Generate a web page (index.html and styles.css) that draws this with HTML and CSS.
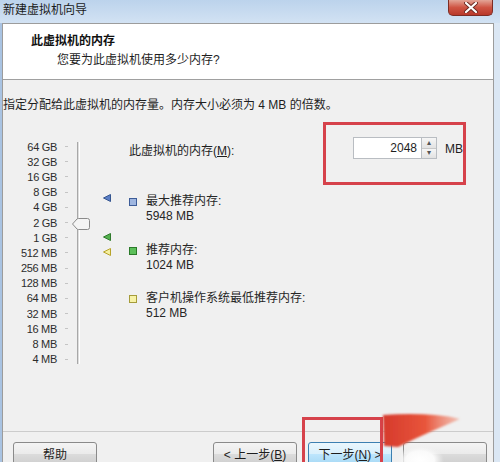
FILE: index.html
```html
<!DOCTYPE html>
<html lang="zh-CN">
<head>
  <meta charset="UTF-8">
  <title>新建虚拟机向导</title>
  <link rel="stylesheet" href="styles.css">
</head>
<body>
  <div class="window">
    <div class="titlebar">
      <span class="title">新建虚拟机向导</span>
      <div class="close">
        <svg width="14" height="11" viewBox="0 0 14 11">
          <path d="M2 1 L12 10 M12 1 L2 10" stroke="#6b2a22" stroke-width="4" stroke-linecap="round"/>
          <path d="M2 1 L12 10 M12 1 L2 10" stroke="#fff" stroke-width="2.2" stroke-linecap="round"/>
        </svg>
      </div>
    </div>

    <div class="client">
      <div class="header">
        <h2>此虚拟机的内存</h2>
        <p>您要为此虚拟机使用多少内存?</p>
      </div>

      <div class="body">
        <p class="intro">指定分配给此虚拟机的内存量。内存大小必须为 4 MB 的倍数。</p>

        <div class="memory">
          <ul class="scale">
            <li><span>64 GB</span><i></i></li>
            <li><span>32 GB</span><i></i></li>
            <li><span>16 GB</span><i></i></li>
            <li><span>8 GB</span><i></i></li>
            <li><span>4 GB</span><i></i></li>
            <li><span>2 GB</span><i></i></li>
            <li><span>1 GB</span><i></i></li>
            <li><span>512 MB</span><i></i></li>
            <li><span>256 MB</span><i></i></li>
            <li><span>128 MB</span><i></i></li>
            <li><span>64 MB</span><i></i></li>
            <li><span>32 MB</span><i></i></li>
            <li><span>16 MB</span><i></i></li>
            <li><span>8 MB</span><i></i></li>
            <li><span>4 MB</span><i></i></li>
          </ul>

          <div class="track">
            <svg class="thumb" width="18" height="12" viewBox="0 0 18 12">
              <path d="M0.5 6 L5 1 Q5.5 0.5 6.5 0.5 L15.5 0.5 Q17.5 0.5 17.5 2.5 L17.5 9.5 Q17.5 11.5 15.5 11.5 L6.5 11.5 Q5.5 11.5 5 11 Z" fill="#f4f4f4" stroke="#8a8a8a"/>
            </svg>
          </div>

          <div class="markers">
            <svg class="tri tri-max" width="8" height="8" viewBox="0 0 8 8">
              <path d="M0.5 4 L7.5 0.5 L7.5 7.5 Z" fill="#5b7fc6" stroke="#35558f"/>
            </svg>
            <svg class="tri tri-rec" width="8" height="8" viewBox="0 0 8 8">
              <path d="M0.5 4 L7.5 0.5 L7.5 7.5 Z" fill="#54b14f" stroke="#2f7a2c"/>
            </svg>
            <svg class="tri tri-min" width="8" height="8" viewBox="0 0 8 8">
              <path d="M0.5 4 L7.5 0.5 L7.5 7.5 Z" fill="#f6f0a0" stroke="#b7a32a"/>
            </svg>
          </div>

          <div class="details">
            <div class="field">
              <label for="memSize">此虚拟机的内存(<u>M</u>):</label>
              <div class="spin">
                <input id="memSize" type="text" value="2048">
                <div class="arrows">
                  <span>&#9652;</span>
                  <span>&#9662;</span>
                </div>
              </div>
              <span class="unit">MB</span>
              <div class="mark mark-field"></div>
            </div>

            <div class="entry">
              <i class="sq sq-max"></i>
              <div>最大推荐内存:<br>5948 MB</div>
            </div>
            <div class="entry entry-rec">
              <i class="sq sq-rec"></i>
              <div>推荐内存:<br>1024 MB</div>
            </div>
            <div class="entry entry-min">
              <i class="sq sq-min"></i>
              <div>客户机操作系统最低推荐内存:<br>512 MB</div>
            </div>
          </div>
        </div>
      </div>

      <div class="footer">
        <button class="btn">帮助</button>
        <div class="nav">
          <button class="btn">&lt; 上一步(<u>B</u>)</button>
          <button class="btn btn-default">下一步(<u>N</u>) &gt;</button>
          <button class="btn"></button>
        </div>
        <div class="mark mark-next"></div>
      </div>
    </div>

    <svg class="smudge" width="100" height="60" viewBox="0 0 100 60">
      <defs>
        <linearGradient id="stroke" x1="0" y1="0" x2="1" y2="0">
          <stop offset="0" stop-color="#d63a2c"/>
          <stop offset="0.55" stop-color="#e8553b"/>
          <stop offset="1" stop-color="#f29078" stop-opacity="0.5"/>
        </linearGradient>
        <radialGradient id="glow">
          <stop offset="0" stop-color="#ffffff"/>
          <stop offset="0.6" stop-color="#fafafa"/>
          <stop offset="1" stop-color="#f0f0f0" stop-opacity="0"/>
        </radialGradient>
        <filter id="soft" x="-10%" y="-10%" width="120%" height="120%">
          <feGaussianBlur stdDeviation="1.2"/>
        </filter>
      </defs>
      <path d="M3 5 Q30 3 55 5 Q70 6 80 9 Q66 15 50 22 Q32 30 18 37 L4 36 Z" fill="url(#stroke)" filter="url(#soft)"/>
      <ellipse cx="40" cy="50" rx="24" ry="15" fill="url(#glow)"/>
    </svg>
  </div>
</body>
</html>
```

FILE: styles.css
```css
body {
  margin: 0;
  padding: 0;
  background: #ffffff;
  font-family: "Liberation Sans", "Noto Sans CJK SC", sans-serif;
  font-size: 12px;
  color: #1e1e1e;
}

.window {
  position: relative;
  width: 500px;
  height: 462px;
  overflow: hidden;
  background: linear-gradient(to right, #a9c3e2 0, #a9c3e2 2px, #dbe7f4 2px);
}

.titlebar {
  display: flex;
  justify-content: space-between;
  align-items: flex-start;
  height: 23px;
  background: linear-gradient(to bottom, #bcd3ec, #d2e2f3);
}

.title {
  margin: 3px 0 0 3px;
  line-height: 14px;
  color: #1b1b1b;
}

.close {
  display: flex;
  align-items: center;
  justify-content: center;
  width: 45px;
  height: 16px;
  margin-right: 7px;
  box-sizing: border-box;
  border: 1px solid #7d2c24;
  border-top: none;
  border-radius: 0 0 5px 5px;
  background: linear-gradient(to bottom, #e3a597, #cf5443 50%, #b8382a);
}

/* main dialog area */
.client {
  margin: 0 6px 0 2px;
  border: 1px solid #9c9c9c;
  border-bottom: none;
  background: #f0f0f0;
}

.header {
  height: 56px;
  padding-top: 9px;
  box-sizing: border-box;
  background: #ffffff;
  border-bottom: 1px solid #a0a0a0;
}

.header h2 {
  margin: 0 0 0 28px;
  font-size: 12px;
  line-height: 16px;
  font-weight: bold;
  color: #111;
}

.header p {
  margin: 3px 0 0 54px;
  line-height: 16px;
}

.body {
  height: 351px;
  padding-top: 18px;
  box-sizing: border-box;
}

.intro {
  margin: 0;
  line-height: 14px;
}

.memory {
  display: flex;
  margin-top: 25px;
}

.scale {
  list-style: none;
  margin: 0;
  padding: 2px 0 0;
  font-size: 11px;
  letter-spacing: -0.3px;
  color: #2c2c2c;
}

.scale li {
  display: flex;
  align-items: center;
  height: 15.2px;
}

.scale span {
  width: 54px;
  text-align: right;
}

.scale i {
  width: 3px;
  height: 1px;
  margin-left: 8px;
  background: #c4c4c4;
}

.track {
  position: relative;
  width: 1px;
  height: 222px;
  margin: 5px 0 0 9px;
  border-left: 1px solid #a8a8a8;
  border-right: 1px solid #ffffff;
  background: #dedede;
}

.thumb {
  position: absolute;
  top: 76px;
  left: -6px;
}

.markers {
  display: flex;
  flex-direction: column;
  width: 8px;
  margin-left: 23px;
}

.tri {
  display: block;
}

.tri-max {
  margin-top: 57px;
}

.tri-rec {
  margin-top: 31px;
}

.tri-min {
  margin-top: 7px;
}

.details {
  flex: 1;
  margin-left: 18px;
}

.field {
  position: relative;
  display: flex;
  align-items: center;
  height: 22px;
}

.field label {
  flex: 0 0 224px;
  padding-top: 3px;
}

.spin {
  display: flex;
  height: 22px;
}

.spin input {
  width: 68px;
  height: 22px;
  box-sizing: border-box;
  padding: 0 4px 0 0;
  border: 1px solid #b9bdc2;
  border-right: none;
  background: #ffffff;
  font: 12px "Liberation Sans", sans-serif;
  color: #1e1e1e;
  text-align: right;
}

.arrows {
  display: flex;
  flex-direction: column;
  width: 16px;
  box-sizing: border-box;
  border: 1px solid #b9bdc2;
}

.arrows span {
  flex: 1;
  display: flex;
  align-items: center;
  justify-content: center;
  font-size: 8px;
  line-height: 1;
  color: #555;
  background: linear-gradient(to bottom, #f6f6f6, #e2e2e2);
}

.arrows span + span {
  border-top: 1px solid #c8c8c8;
}

.unit {
  margin-left: 8px;
  padding-top: 2px;
}

.mark {
  position: absolute;
  box-sizing: border-box;
  border: 3px solid #d6424b;
}

.mark-field {
  top: -15px;
  left: 194px;
  width: 143px;
  height: 63px;
}

.entry {
  display: flex;
  line-height: 15px;
  color: #262626;
}

.entry:nth-child(2) {
  margin-top: 35px;
}

.entry-rec {
  margin-top: 19px;
}

.entry-min {
  margin-top: 18px;
}

.sq {
  width: 8px;
  height: 8px;
  margin: 4px 9px 0 0;
  box-sizing: border-box;
  border: 1px solid;
}

.sq-max {
  background: #9fb6e0;
  border-color: #3d5c98;
}

.sq-rec {
  background: #5cbf5a;
  border-color: #2b7a29;
}

.sq-min {
  background: #f7f2a6;
  border-color: #a59c3a;
}

/* buttons row */
.footer {
  position: relative;
  display: flex;
  justify-content: space-between;
  height: 30px;
  padding: 10px 6px 0 10px;
  border-top: 1px solid #cccccc;
}

.nav {
  display: flex;
  gap: 11px;
}

.btn {
  width: 84px;
  height: 23px;
  padding: 0;
  border: 1px solid #8a8a8a;
  border-radius: 3px;
  background: linear-gradient(to bottom, #f4f4f4 0, #ebebeb 50%, #dcdcdc 51%, #cfcfcf);
  font: 12px "Liberation Sans", "Noto Sans CJK SC", sans-serif;
  color: #1e1e1e;
}

.btn-default {
  border-color: #3c7fb1;
  background: linear-gradient(to bottom, #eaf6fd 0, #d9f0fc 50%, #bee6fd 51%, #a7d9f5);
}

.mark-next {
  top: -15px;
  left: 299px;
  width: 81px;
  height: 60px;
}

.smudge {
  position: absolute;
  left: 380px;
  top: 410px;
}
```
